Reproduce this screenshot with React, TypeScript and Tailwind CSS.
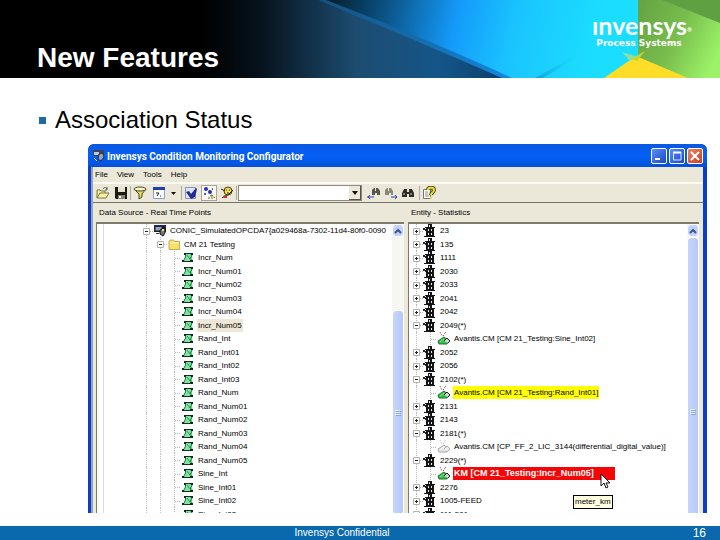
import type { ReactNode } from "react";

type Kind = "server" | "folder" | "point" | "entity" | "link" | "linkOff";

interface Row {
  label: string;
  depth: number;
  kind: Kind;
  toggle?: "+" | "-";
  mark?: "beige" | "yellow" | "red";
}

const point = (label: string): Row => ({ label, depth: 2, kind: "point" });
const entity = (label: string, toggle: "+" | "-" = "+"): Row => ({
  label,
  depth: 0,
  kind: "entity",
  toggle,
});

const sourceRows: Row[] = [
  {
    label: "CONIC_SimulatedOPCDA7{a029468a-7302-11d4-80f0-0090",
    depth: 0,
    kind: "server",
    toggle: "-",
  },
  { label: "CM 21 Testing", depth: 1, kind: "folder", toggle: "-" },
  point("Incr_Num"),
  point("Incr_Num01"),
  point("Incr_Num02"),
  point("Incr_Num03"),
  point("Incr_Num04"),
  { ...point("Incr_Num05"), mark: "beige" },
  point("Rand_Int"),
  point("Rand_Int01"),
  point("Rand_Int02"),
  point("Rand_Int03"),
  point("Rand_Num"),
  point("Rand_Num01"),
  point("Rand_Num02"),
  point("Rand_Num03"),
  point("Rand_Num04"),
  point("Rand_Num05"),
  point("Sine_Int"),
  point("Sine_Int01"),
  point("Sine_Int02"),
  point("Sine_Int03"),
];

const entityRows: Row[] = [
  entity("23"),
  entity("135"),
  entity("1111"),
  entity("2030"),
  entity("2033"),
  entity("2041"),
  entity("2042"),
  entity("2049(*)", "-"),
  { label: "Avantis.CM [CM 21_Testing:Sine_Int02]", depth: 1, kind: "link" },
  entity("2052"),
  entity("2056"),
  entity("2102(*)", "-"),
  { label: "Avantis.CM [CM 21_Testing:Rand_Int01]", depth: 1, kind: "link", mark: "yellow" },
  entity("2131"),
  entity("2143"),
  entity("2181(*)", "-"),
  {
    label: "Avantis.CM [CP_FF_2_LIC_3144(differential_digital_value)]",
    depth: 1,
    kind: "linkOff",
  },
  entity("2229(*)", "-"),
  { label: "KM [CM 21_Testing:Incr_Num05]", depth: 1, kind: "link", mark: "red" },
  entity("2276"),
  entity("1005-FEED"),
  entity("111-501"),
];

function RowIcon({ kind }: { kind: Kind }) {
  if (kind === "server")
    return (
      <svg viewBox="0 0 14 13" className="h-[13px] w-[14px] shrink-0">
        <path d="M1 1h12v7H1z" fill="#222" />
        <path d="M2.500 3h6v3.500h-6z" fill="#8fa6c8" />
        <path d="M1 1h12v1.500H1z" fill="#23237e" />
        <path d="M7 6l5-2v5l-2 3-3-2z" fill="#777" stroke="#111" />
        <path d="M9 5h2v2H9z" fill="#f3e85b" />
        <path d="M3 9h3v1H3z" fill="#333" />
      </svg>
    );
  if (kind === "folder")
    return (
      <svg viewBox="0 0 14 13" className="h-[13px] w-[14px] shrink-0">
        <path d="M2 3.500l1-1.500h3.500l1 1.500h5v8H2z" fill="#f7df6c" stroke="#c9a94c" />
        <path d="M3 5h9" stroke="#fff6b8" />
      </svg>
    );
  if (kind === "point")
    return (
      <svg viewBox="0 0 14 13" className="h-[13px] w-[14px] shrink-0">
        <path d="M4 2h8l-1 3 1 6H2l2-4z" fill="#7be8a2" />
        <path d="M4 2.500h8M2 10.500h10" stroke="#17331f" />
        <path d="M4.500 3v3L2.500 10M11.500 3l-2 4 1 3" fill="none" stroke="#2c6b42" />
        <path d="M6 4l3 4" stroke="#3a8a57" />
        <path d="M9 2h3v2h-2zM1 9h2v2H1zM9 9h3v2H9zM3 2h2v2H3z" fill="#10271a" />
      </svg>
    );
  if (kind === "entity")
    return (
      <svg viewBox="0 0 14 13" className="h-[13px] w-[14px] shrink-0">
        <path d="M0 4h2v1h2v2H2V6H0z" fill="#222" />
        <path d="M5 0h4v3h2v10H3V3h2z" fill="#151515" />
        <path d="M6 1h1v2H6zM5 5h1v2H5zM8 5h1v2H8zM5 9h1v2H5zM8 9h1v2H8z" fill="#e8e8e8" />
        <path d="M1 12.500h11M2 3.500h10" stroke="#151515" />
      </svg>
    );
  const off = kind === "linkOff";
  return (
    <svg viewBox="0 0 14 13" className="h-[13px] w-[14px] shrink-0">
      <path d="M3 0l1 2 1 2M9 0L7 2 6 5" fill="none" stroke={off ? "#bbb" : "#a33"} strokeDasharray="1 1" />
      <path
        d="M1 9l6-4 5 4-2 3H2z"
        fill={off ? "#e4e4e4" : "#2fc344"}
        stroke={off ? "#aaa" : "#2a6b35"}
      />
      <path d="M7 9l3-3 3 3-2 2" fill={off ? "#eee" : "#cfd6cf"} stroke={off ? "#aaa" : "#222"} />
      <path d="M3 10l4-3" stroke={off ? "#fff" : "#7cf08a"} />
    </svg>
  );
}

function Guide() {
  return (
    <span className="flex w-[14px] shrink-0 justify-center self-stretch">
      <span className="w-px border-l border-dotted border-[#c4c4c4]" />
    </span>
  );
}

function Branch({ toggle }: { toggle?: "+" | "-" }) {
  if (!toggle)
    return (
      <svg viewBox="0 0 14 14" className="h-[14px] w-[14px] shrink-0" fill="none">
        <path d="M7.500 0v14M8 7.500h6" stroke="#b8b8b8" strokeDasharray="1 1" />
      </svg>
    );
  return (
    <button type="button" aria-label="Toggle" className="h-[14px] w-[14px] shrink-0">
      <svg viewBox="0 0 14 14" className="h-[14px] w-[14px]" fill="none">
        <path d="M7.500 0v4M7.500 11v3M11 7.500h3" stroke="#b8b8b8" strokeDasharray="1 1" />
        <path d="M4.500 4.500h6v6h-6z" fill="#fff" stroke="#b2b2aa" />
        <path d="M6 7.500h3" stroke="#222" />
        {toggle === "+" && <path d="M7.500 6v3" stroke="#222" />}
      </svg>
    </button>
  );
}

function Label({ row }: { row: Row }) {
  if (row.mark === "red")
    return (
      <span className="relative w-[162px] bg-[#f50505] px-px text-[9px] font-bold text-white">
        {row.label}
        <svg viewBox="0 0 11 17" className="absolute top-[6px] left-[147px] z-10 h-[17px] w-[11px]">
          <path d="M1 1v12l3-3 2 5 2-1-2-4h4z" fill="#fff" stroke="#111" />
        </svg>
        <span
          role="tooltip"
          className="absolute top-[28px] left-[120px] border border-black bg-[#ffffe1] px-px text-[8px] leading-[12px] font-normal text-black"
        >
          meter_km
        </span>
      </span>
    );
  if (row.mark === "yellow") return <span className="bg-[#ffff00] px-px">{row.label}</span>;
  if (row.mark === "beige") return <span className="bg-[#efe8d6] px-px">{row.label}</span>;
  return <span className="px-px">{row.label}</span>;
}

function Tree({ rows, inset }: { rows: Row[]; inset?: boolean }) {
  return (
    <ul className="grid h-[297px] min-w-0 flex-1 auto-rows-fr overflow-hidden">
      {rows.map((row) => (
        <li key={row.label} className="flex min-h-0 items-center whitespace-nowrap">
          {inset && (
            <span className="w-[42px] shrink-0 self-stretch pl-[6px]">
              <span className="block h-full border-l border-[#dcdcdc]" />
            </span>
          )}
          {Array.from({ length: row.depth }, (_, i) => (
            <Guide key={i} />
          ))}
          <Branch toggle={row.toggle} />
          <RowIcon kind={row.kind} />
          <span className="ml-[2px] flex leading-[13px]">
            <Label row={row} />
          </span>
        </li>
      ))}
    </ul>
  );
}

function Scrollbar({ long }: { long?: boolean }) {
  return (
    <div className="flex w-[12px] shrink-0 flex-col bg-[#f7f7f2]">
      <button
        type="button"
        aria-label="Scroll up"
        className="flex h-[13px] shrink-0 items-center justify-center rounded-sm border border-white bg-[#c3d3fb]"
      >
        <svg viewBox="0 0 8 6" className="h-[6px] w-[8px]" fill="none">
          <path d="M1 5l3-3 3 3" stroke="#3f5684" strokeWidth="2" />
        </svg>
      </button>
      {!long && <div className="h-[73px] shrink-0" />}
      <div
        className={`flex shrink-0 items-center justify-center rounded-sm border border-white bg-linear-to-r from-[#c6d5fd] to-[#b5c8f6] ${
          long ? "h-[350px]" : "h-[205px]"
        }`}
      >
        <svg viewBox="0 0 6 6" className="h-[6px] w-[6px]">
          <path d="M0 .5h5M0 2.500h5M0 4.500h5" stroke="#eef4fe" />
          <path d="M1 1.500h5M1 3.500h5M1 5.500h5" stroke="#8ca5dc" />
        </svg>
      </div>
    </div>
  );
}

function Pane({ title, children }: { title: string; children: ReactNode }) {
  return (
    <section className="min-w-0">
      <h2 className="h-[19px] px-[3px] leading-[19px]">{title}</h2>
      <div className="flex h-[291px] overflow-hidden border-t-2 border-l border-[#7d7a6c] bg-white">
        {children}
      </div>
    </section>
  );
}

function Tool({ label, pressed, children }: { label: string; pressed?: boolean; children: ReactNode }) {
  return (
    <button
      type="button"
      aria-label={label}
      className={`flex h-[16px] w-[16px] shrink-0 items-center justify-center ${
        pressed ? "border border-[#a9a695] bg-[#f8f7f1]" : ""
      }`}
    >
      <svg viewBox="0 0 14 14" className="h-[14px] w-[14px] shrink-0" fill="none">
        {children}
      </svg>
    </button>
  );
}

function Divider() {
  return <span className="mx-px h-[14px] w-px shrink-0 bg-[#aeab9b]" />;
}

function Toolbar() {
  return (
    <div className="flex h-[21px] items-center border-t-2 border-b border-t-[#fbfaf3] border-b-[#77756a] px-[2px]">
      <Tool label="Open">
        <path d="M1 12V4h3l1 1h4v2" fill="#f4ee9a" stroke="#7b7840" />
        <path d="M1 12l3-5h9l-3 5z" fill="#f7f2a5" stroke="#7b7840" />
        <path d="M7 3c1-2 3-2 4 0M11 1v3H9" stroke="#555" />
      </Tool>
      <span className="w-[2px]" />
      <Tool label="Save">
        <path d="M1 1h12v12H2l-1-1z" fill="#1b1b12" />
        <path d="M4 1h7v5H4z" fill="#e4e2cf" />
        <path d="M4 9h7v4H4z" fill="#88866e" />
        <path d="M5 10h2v2H5z" fill="#fff" />
      </Tool>
      <Divider />
      <Tool label="Filter">
        <path d="M1 3l5 5v5l3-2V8l4-5z" fill="#e6d96a" stroke="#4a4622" />
        <ellipse cx="7" cy="3" rx="6" ry="2" fill="#f6f3cf" stroke="#4a4622" />
      </Tool>
      <span className="w-[3px]" />
      <Tool label="View">
        <path d="M1.500 1.500h11v11h-11z" fill="#fff" stroke="#8b9fce" />
        <path d="M1 1h12v3H1z" fill="#1f3fb4" />
        <path d="M4 7h3l-2 3M8 10h1" stroke="#222" />
      </Tool>
      <button
        type="button"
        aria-label="View options"
        className="flex h-[16px] w-[13px] shrink-0 items-center justify-center"
      >
        <svg viewBox="0 0 5 3" className="h-[3px] w-[5px]">
          <path d="M0 0h5L2.500 3z" fill="#111" />
        </svg>
      </button>
      <Divider />
      <Tool label="Check">
        <path d="M1.500 1.500h10v11h-10z" fill="#dfe3f5" stroke="#8a91c0" />
        <path d="M2 6l3-1 2 3 5-6 1 1-2 8-4 2z" fill="#202a96" />
      </Tool>
      <span className="w-[2px]" />
      <Tool label="Associations" pressed>
        <circle cx="4" cy="3" r="2" fill="#2732b3" />
        <circle cx="8" cy="6" r="2" fill="#2732b3" />
        <path d="M2 7h2v2H2zM10 2h1v2h-1z" fill="#515bc9" />
        <path d="M8 10l2-1 3 3M10 13V9M6 12h2" stroke="#6b6a4a" />
        <path d="M10 10h2v2h-2z" fill="#d9cf4e" />
      </Tool>
      <span className="w-[2px]" />
      <Tool label="Diagnose">
        <circle cx="8" cy="5" r="4" fill="#f3df54" stroke="#4a4016" />
        <path d="M6 4h1M9 4h1M7 7h2" stroke="#2b2410" />
        <path d="M1 3l4 2M2 12c2-3 4-2 6-3l5-5" stroke="#2b2410" />
        <path d="M3 11h4" stroke="#c53726" strokeWidth="2" />
      </Tool>
      <Divider />
      <div className="flex h-[16px] w-[124px] shrink-0 border border-[#8d8b7e] bg-white">
        <input aria-label="Search text" className="min-w-0 flex-1 px-1 outline-none" />
        <button
          type="button"
          aria-label="Recent searches"
          className="flex w-[12px] items-center justify-center border-r border-b border-[#55534a] bg-[#ece9d8]"
        >
          <svg viewBox="0 0 6 4" className="h-[4px] w-[6px]">
            <path d="M0 0h6L3 4z" fill="#111" />
          </svg>
        </button>
      </div>
      <span className="w-[4px]" />
      <Tool label="Find previous">
        <path d="M5 8V4l2-2h1v3h1V2h2l2 3v4h-3V7H8v2H5z" fill="#57554d" />
        <path d="M0 11h7M3 9l-2 2 2 2" stroke="#2c3fb0" />
      </Tool>
      <span className="w-px" />
      <Tool label="Find next">
        <path d="M1 8V4l2-2h1v3h1V2h2l2 3v4H7V7H5v2H1z" fill="#8a887d" />
        <path d="M7 11h6M11 9l2 2-2 2" stroke="#2c3fb0" />
      </Tool>
      <span className="w-px" />
      <Tool label="Find">
        <path d="M1 11V7l2-4h3v3h2V3h3l2 4v4H8V8H6v3z" fill="#2c2b26" />
        <path d="M3 7v2M10 7v2" stroke="#d8d6c8" />
      </Tool>
      <span className="w-[2px]" />
      <Divider />
      <Tool label="Help">
        <path d="M1.500 3.500h7v9h-7z" fill="#fff" stroke="#77756a" />
        <path d="M3 6h3M3 8h3M3 10h4" stroke="#888" />
        <path d="M6 4c0-3 6-3 6 0s-3 2-3 5" stroke="#54501a" strokeWidth="4" />
        <path d="M6 4c0-3 6-3 6 0s-3 2-3 5M9 11v2" stroke="#e8dd3e" strokeWidth="2" />
      </Tool>
    </div>
  );
}

function TitleBar() {
  return (
    <div className="flex h-[23px] items-center gap-[2px] rounded-t-md bg-linear-to-b from-[#0a58e0] via-[#0560f5] to-[#0450d8] px-[4px]">
      <svg viewBox="0 0 13 13" className="h-[13px] w-[13px]" fill="none">
        <path d="M1 1h11v6H1z" fill="#3d4654" />
        <path d="M2 3h5v3H2z" fill="#b9cce6" />
        <path d="M7 5l4-1 1 4-3 4-3-2z" fill="#97a4b5" stroke="#1f2b45" />
        <path d="M2 9l3 3" stroke="#c9d4e4" />
      </svg>
      <h1 className="flex-1 truncate pt-px font-['Roboto',sans-serif] text-[10px] font-bold text-white">
        Invensys Condition Monitoring Configurator
      </h1>
      <button
        type="button"
        aria-label="Minimize"
        className="h-[16px] w-[16px] rounded-xs border border-white bg-linear-to-br from-[#5c8cf2] to-[#1848cc]"
      >
        <svg viewBox="0 0 14 14">
          <path d="M3 9h5v2H3z" fill="#fff" />
        </svg>
      </button>
      <button
        type="button"
        aria-label="Maximize"
        className="h-[16px] w-[16px] rounded-xs border border-white bg-linear-to-br from-[#5c8cf2] to-[#1848cc]"
      >
        <svg viewBox="0 0 14 14" fill="none">
          <path d="M3.500 3v8H11V3" stroke="#dfe8ff" />
          <path d="M3 3.500h8" stroke="#fff" strokeWidth="2" />
        </svg>
      </button>
      <button
        type="button"
        aria-label="Close"
        className="h-[16px] w-[16px] rounded-xs border border-white bg-linear-to-br from-[#e98468] to-[#cc3a18]"
      >
        <svg viewBox="0 0 14 14">
          <path d="M3 3l8 8M11 3l-8 8" stroke="#fff" strokeWidth="2" />
        </svg>
      </button>
    </div>
  );
}

function Configurator() {
  return (
    <div className="mr-[13px] ml-[88px] overflow-hidden rounded-t-md bg-[#0a3fc4] text-[8px] text-black">
      <TitleBar />
      <div className="mr-[4px] ml-[3px] border-l-2 border-[#9aa3b5] bg-[#ebe8d9]">
        <nav className="flex h-[15px] items-center gap-[9px] px-[2px]">
          <button type="button">File</button>
          <button type="button">View</button>
          <button type="button">Tools</button>
          <button type="button">Help</button>
        </nav>
        <Toolbar />
        <div className="grid grid-cols-[minmax(0,308fr)_minmax(0,291fr)] gap-[4px] pr-[4px] pl-[3px]">
          <Pane title="Data Source - Real Time Points">
            <Tree rows={sourceRows} inset />
            <Scrollbar />
          </Pane>
          <Pane title="Entity - Statistics">
            <Tree rows={entityRows} />
            <Scrollbar long />
          </Pane>
        </div>
      </div>
    </div>
  );
}

function Banner() {
  return (
    <svg
      viewBox="0 0 720 78"
      preserveAspectRatio="none"
      className="absolute inset-0 h-full w-full"
      aria-hidden="true"
    >
      <defs>
        <linearGradient id="night" gradientUnits="userSpaceOnUse" x1="200" y1="0" x2="500" y2="0">
          <stop offset="0" stopColor="#000" />
          <stop offset=".2" stopColor="#06121c" />
          <stop offset=".52" stopColor="#1d4c70" />
          <stop offset=".8" stopColor="#145689" />
          <stop offset="1" stopColor="#0c3f6c" />
        </linearGradient>
        <linearGradient id="sky" gradientUnits="userSpaceOnUse" x1="330" y1="0" x2="590" y2="60">
          <stop offset="0" stopColor="#05202f" />
          <stop offset=".2" stopColor="#0b5080" />
          <stop offset=".48" stopColor="#149bfa" />
          <stop offset=".7" stopColor="#1ac4ff" />
          <stop offset="1" stopColor="#1bddff" />
        </linearGradient>
        <linearGradient id="edge" gradientUnits="userSpaceOnUse" x1="320" y1="0" x2="512" y2="78">
          <stop offset="0" stopColor="#14507f" />
          <stop offset="1" stopColor="#1488dc" />
        </linearGradient>
        <linearGradient id="leaf" gradientUnits="userSpaceOnUse" x1="638" y1="10" x2="720" y2="50">
          <stop offset="0" stopColor="#66a444" />
          <stop offset=".5" stopColor="#78bd4d" />
          <stop offset="1" stopColor="#9cf268" />
        </linearGradient>
        <linearGradient id="ray" gradientUnits="userSpaceOnUse" x1="538" y1="78" x2="585" y2="50">
          <stop offset="0" stopColor="#12a8dc" />
          <stop offset="1" stopColor="#1bddff" stopOpacity="0" />
        </linearGradient>
      </defs>
      <path d="M0 0h720v78H0z" fill="#000" />
      <path d="M200 0h140l172 78H200z" fill="url(#night)" />
      <path d="M318 0h320v78H510Q420 38 318 0z" fill="url(#sky)" />
      <path d="M318 0h8Q430 40 512 78h-10Q420 42 318 0z" fill="url(#edge)" />
      <path d="M535 78l50-28 4 0-46 28z" fill="url(#ray)" />
      <path d="M638 0h82v78H610l28-20z" fill="url(#leaf)" />
      <path d="M610 78l28-20v-6l-34 26z" fill="#1bddff" />
      <path d="M662 0h58v23z" fill="#5fa043" />
      <path d="M604 78l32-22 52 22z" fill="#fddd28" />
      <path d="M622 52l16 5-8 4z" fill="#8fe0a0" />
      <path d="M645 51l-14 8 6 2z" fill="#c5d535" />
    </svg>
  );
}

export default function App() {
  return (
    <div className="flex min-h-screen flex-col bg-white font-['Liberation_Sans',Arial,sans-serif] text-black">
      <header className="relative h-[78px]">
        <Banner />
        <div className="relative flex h-full items-start justify-between pr-[28px] pl-[37px] text-white">
          <h1 className="pt-[42px] text-[28px] leading-[32px] font-bold">New Features</h1>
          <div className="flex flex-col items-center pt-[12px]">
            <p className="flex items-end font-['Lato',sans-serif] text-[25px] leading-[26px] font-bold">
              ınvensys<span className="text-[6px] leading-[16px]">®</span>
            </p>
            <p className="pr-[6px] font-['DejaVu_Sans',sans-serif] text-[9px] leading-[11px] font-bold">
              Process Systems
            </p>
          </div>
        </div>
      </header>

      <main className="flex-1">
        <ul className="px-[39px] pt-[28px] pb-[10px]">
          <li className="flex items-center gap-[9px] text-[24px] leading-[28px]">
            <span className="h-[7px] w-[7px] bg-[#1d6ba6]" />
            Association Status
          </li>
        </ul>
        <Configurator />
      </main>

      <footer className="grid h-[14px] grid-cols-[295fr_auto_317fr] items-center bg-[#0a69ac] pr-[14px] text-white">
        <span />
        <span className="text-[10px] leading-[14px]">Invensys Confidential</span>
        <span className="text-right text-[12px] leading-[14px]">16</span>
      </footer>
    </div>
  );
}
